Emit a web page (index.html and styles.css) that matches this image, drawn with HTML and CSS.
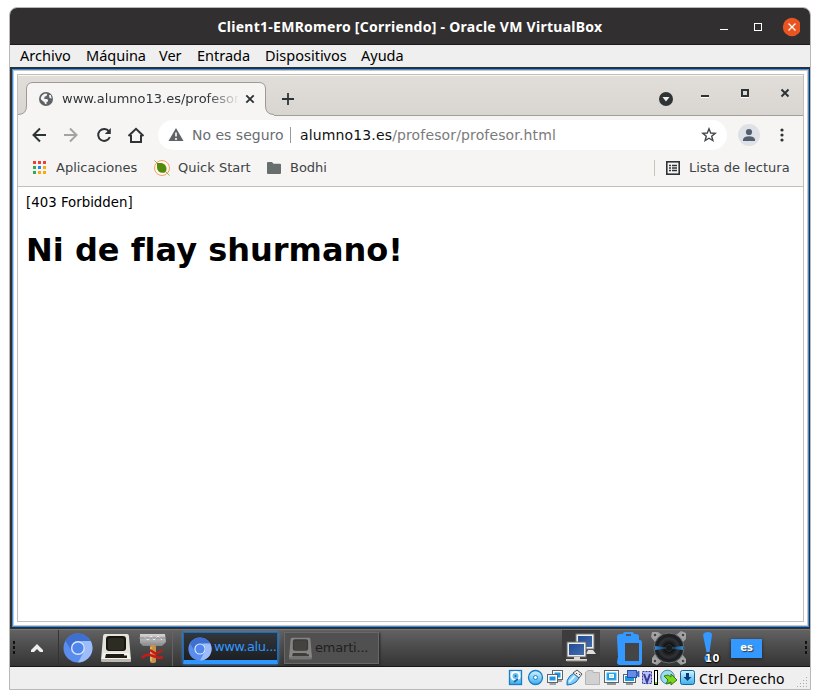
FILE: index.html
```html
<!DOCTYPE html>
<html lang="es">
<head>
<meta charset="utf-8">
<title>Client1-EMRomero [Corriendo] - Oracle VM VirtualBox</title>
<link rel="stylesheet" href="styles.css">
</head>
<body>
<svg class="defs" width="0" height="0">
  <defs>
    <linearGradient id="blueGrad" x1="0" y1="0" x2="0" y2="1"><stop offset="0" stop-color="#d2f5ff"/><stop offset="1" stop-color="#39aef0"/></linearGradient>
    <linearGradient id="brick" x1="0" y1="0" x2="0" y2="1"><stop offset="0" stop-color="#d5d5d5"/><stop offset="1" stop-color="#888"/></linearGradient>
    <linearGradient id="screen" x1="0" y1="0" x2="1" y2="1"><stop offset="0" stop-color="#234c94"/><stop offset="1" stop-color="#416ead"/></linearGradient>
    <radialGradient id="cone"><stop offset="0" stop-color="#111"/><stop offset=".28" stop-color="#292c30"/><stop offset=".34" stop-color="#111"/><stop offset=".75" stop-color="#303338"/><stop offset="1" stop-color="#17191b"/></radialGradient>
    <linearGradient id="glow"><stop offset="0" stop-color="#269cff" stop-opacity=".9"/><stop offset=".5" stop-color="#1a5f9e" stop-opacity=".2"/><stop offset="1" stop-color="#269cff" stop-opacity=".9"/></linearGradient>
    <symbol id="chromium" viewBox="0 0 30 30">
      <circle cx="15" cy="15" r="14.500" fill="#5b8def"/>
      <path d="M2.400 7.800A14.500 14.500 0 0 1 27.700 8H15A7 7 0 0 0 9 18.500Z" fill="#3f6fd0"/>
      <path d="M27.700 8A14.500 14.500 0 0 1 15 29.500L21 18.500A7 7 0 0 0 21 11L18 8Z" fill="#9dbdf9"/>
      <circle cx="15" cy="15" r="7" fill="#dce8ff"/><circle cx="15" cy="15" r="5.600" fill="#4f86ec"/>
    </symbol>
    <symbol id="terminal" viewBox="0 0 32 30">
      <path d="M5 1H27Q29 1 29 4L31 27Q31 29 29 29H3Q1 29 1 27L3 4Q3 1 5 1Z" fill="#e5e3dc"/>
      <path d="M3 20H29L30.500 26H1.500Z" fill="#f3f2ed"/><path d="M1 26H31V28Q31 29 29 29H3Q1 29 1 27Z" fill="#bbb8b0"/>
      <rect x="6" y="3" width="20" height="15" rx="3" fill="#17160f"/><rect x="8" y="5" width="16" height="12" rx="2" fill="#2d2c22"/>
      <path d="M6 21H24V22.500H27V25H5Z" fill="#211b18"/>
    </symbol>
  </defs>
</svg>
<div class="window">
  <header class="titlebar">
    <h1 class="title"><span>Client1-EMRomero [Corriendo] - Oracle VM VirtualBox</span></h1>
    <div class="host-controls">
      <svg width="90" height="24" viewBox="0 0 90 24"><path d="M10 14.500h8" stroke="#fff"/><rect x="44.500" y="8.500" width="7" height="7" fill="none" stroke="#fff"/><circle cx="82" cy="12" r="9.200" fill="#e95420"/><path d="M78.500 8.500l7 7m0-7l-7 7" stroke="#fff" stroke-width="1.300"/></svg>
    </div>
  </header>
  <nav class="menubar"><span>Archivo</span><span>Máquina</span><span>Ver</span><span>Entrada</span><span>Dispositivos</span><span>Ayuda</span></nav>

  <section class="guest">
    <div class="guest-frame">
      <div class="browser">
        <div class="tabstrip">
          <div class="tab">
            <svg class="tab-shape" width="257" height="34" viewBox="0 0 257 34"><path d="M0 34V32.500Q8.500 32.500 8.500 24V7Q8.500 .5 15 .5H241Q247.500 .5 247.500 7V24Q247.500 32.500 256 32.500V34Z" fill="#f6f5f3"/><path d="M0 32.500Q8.500 32.500 8.500 24V7Q8.500 .5 15 .5H241Q247.500 .5 247.500 7V24Q247.500 32.500 256 32.500" fill="none" stroke="#9c9a97"/></svg>
            <svg class="globe" width="14" height="14" viewBox="0 0 14 14"><circle cx="7" cy="7" r="7" fill="#5f6368"/><path d="M7 1.500C9.500 2 7.500 4.500 5.500 4.700L5.300 7H8Q9.500 7.500 9 9.500L7.500 10V12.300Q5.500 12.500 5.600 10.500L2 7.500Q1 4.500 5 2ZM10 3H11.800L12.700 6.500L10.500 6Z" fill="#f6f5f3"/></svg>
            <span class="tab-label">www.alumno13.es/profesor</span>
            <svg class="tab-close" width="10" height="10" viewBox="0 0 10 10"><path d="M1.300 1.300l7.400 7.400m0-7.400L1.300 8.700" stroke="#2e3436" stroke-width="1.900"/></svg>
          </div>
          <svg class="plus" width="12" height="12" viewBox="0 0 12 12"><path d="M6 0v12M0 6h12" stroke="#2e3436" stroke-width="1.800"/></svg>
          <svg class="guest-controls" width="134" height="24" viewBox="0 0 134 24"><circle cx="8" cy="14" r="7" fill="#2e3436"/><path d="M4.500 12h7L8 16.500z" fill="#f1efec"/><path d="M43 11h8" stroke="#2e3436" stroke-width="2"/><path d="M43 12.500h8" stroke="#fff"/><rect x="84" y="5" width="6" height="6" fill="none" stroke="#2e3436" stroke-width="2"/><path d="M83 12.500h8" stroke="#fff"/><path d="M123.500 4.500l7 7m0-7l-7 7" stroke="#2e3436" stroke-width="2"/></svg>
        </div>
        <div class="toolbar">
          <svg class="nav-icons" width="120" height="20" viewBox="0 0 120 20" fill="none" stroke="#2e3436" stroke-width="2"><path d="M16 10H3.500M10 3.500L3.500 10L10 16.500"/><path d="M34 10H46.500M40 3.500L46.500 10L40 16.500" stroke="#a3a3a3"/><path d="M79 6.300A6 6 0 1 0 79.800 12"/><path d="M80.800 3V9H74.800Z" fill="#2e3436" stroke="none"/><path d="M98.500 11L106 3.800L113.500 11M101 10V17H111V10"/></svg>
          <div class="address">
            <svg width="16" height="14" viewBox="0 0 16 14"><path d="M8 0L15.500 13H.5Z" fill="#5f6368"/><path d="M8 4.500V8.500M8 10V12" stroke="#fff" stroke-width="1.600"/></svg>
            <span class="unsafe">No es seguro</span><i class="divider"></i>
            <span class="url"><b>alumno13.es</b>/profesor/profesor.html</span>
            <svg class="star" width="16" height="16" viewBox="0 0 16 16"><path d="M8 1.800L9.700 6L14.200 6.300L10.700 9.200L11.900 13.600L8 11.200L4.100 13.600L5.300 9.200L1.800 6.300L6.300 6Z" fill="none" stroke="#44494d" stroke-width="1.400"/></svg>
          </div>
          <svg class="avatar" width="22" height="22" viewBox="0 0 22 22"><circle cx="11" cy="11" r="11" fill="#dee1e6"/><circle cx="11" cy="8" r="3.100" fill="#535f70"/><path d="M5 17V15.500Q6 12.300 11 12.300T17 15.500V17Z" fill="#535f70"/></svg>
          <svg class="dots" width="4" height="14" viewBox="0 0 4 14" fill="#2e3436"><circle cx="2" cy="2" r="1.600"/><circle cx="2" cy="7" r="1.600"/><circle cx="2" cy="12" r="1.600"/></svg>
        </div>
        <div class="bookmarks">
          <svg width="13" height="13" viewBox="0 0 13 13"><path d="M0 0h3v3H0zM5 0h3v3H5zM10 0h3v3h-3z" fill="#ea4335"/><path d="M0 5h3v3H0zM0 10h3v3H0z" fill="#34a853"/><path d="M5 5h3v3H5z" fill="#1a88f5"/><path d="M10 5h3v3h-3zM5 10h3v3H5zM10 10h3v3h-3z" fill="#fbab08"/></svg>
          <span class="apps">Aplicaciones</span>
          <svg width="16" height="16" viewBox="0 0 16 16"><circle cx="8" cy="8" r="7.500" fill="#fff8ef" stroke="#f2a06a"/><path d="M.5.5L15.500 15.500" stroke="#8ebc49"/><path d="M3 3H8Q13 5 12.500 10L11 12.500Q4 14 3 8Z" fill="#558b0b"/></svg>
          <span class="quick">Quick Start</span>
          <svg width="14" height="12" viewBox="0 0 14 12"><path d="M0 1Q0 0 1 0H5L6.500 1.700H13Q14 1.700 14 2.700V11Q14 12 13 12H1Q0 12 0 11Z" fill="#686d6e"/></svg>
          <span class="bodhi">Bodhi</span>
          <i class="bookmark-divider"></i>
          <svg width="14" height="14" viewBox="0 0 14 14"><rect x=".8" y=".8" width="12.400" height="12.400" fill="none" stroke="#2e3436" stroke-width="1.600"/><path d="M3 4.500h2M3 7h2M3 9.500h2M6 4.500h5M6 7h5M6 9.500h5" stroke="#2e3436" stroke-width="1.500"/></svg>
          <span class="reading">Lista de lectura</span>
        </div>
        <main class="page"><p>[403 Forbidden]</p><h2>Ni de flay shurmano!</h2></main>
      </div>
    </div>
    <div class="taskbar">
      <svg class="grip" width="4" height="14" viewBox="0 0 4 14" fill="#111"><rect width="2" height="3"/><rect y="5" width="2" height="3"/><rect y="10" width="2" height="3"/></svg>
      <div class="launcher"><svg width="12" height="9" viewBox="0 0 12 9"><path d="M0 6L6 0L12 6V8H9L6 5L3 8H0Z" fill="#eee"/></svg></div>
      <div class="shortcuts">
        <svg width="30" height="30"><use href="#chromium"/></svg>
        <svg width="32" height="30"><use href="#terminal"/></svg>
        <svg width="28" height="32" viewBox="0 0 28 32"><path d="M1 2H26L27 10L23 14H4L1 11Z" fill="url(#brick)"/><path d="M5 5L9 8L12 4L15 8L19 4L23 8" fill="none" stroke="#eee"/><path d="M0 6H27" stroke="#888"/><rect x="11" y="13" width="6" height="18" rx="2" fill="#c69449"/><path d="M12 15V29" stroke="#efcb89"/><path d="M3 26Q6 22 11 23L20 26L24 25M11 18L17 22L23 18" fill="none" stroke="#c71a16" stroke-width="2.500"/></svg>
      </div>
      <div class="task active"><svg width="24" height="24"><use href="#chromium"/></svg><span>www.alu...</span></div>
      <div class="task idle"><svg width="25" height="23"><use href="#terminal"/></svg><span>emarti...</span></div>
      <div class="tray">
        <div class="network"><svg width="30" height="30" viewBox="0 0 30 30"><rect x="10" y="1" width="18" height="15" fill="#eee" stroke="#777"/><rect x="12" y="3" width="14" height="11" fill="url(#screen)"/><path d="M22 17h5l3 4H20z" fill="#ddd"/><rect x="1" y="9" width="19" height="15" fill="#eee" stroke="#666"/><rect x="3" y="11" width="15" height="11" fill="url(#screen)"/><path d="M8 24h6v2h7v2H0v-2h8z" fill="#ddd8cb"/><path d="M1 28h20" stroke="#888"/></svg></div>
        <svg class="clipboard" width="25" height="33" viewBox="0 0 25 33"><path d="M0 5Q0 2 3 2H6Q6 0 8 0H15Q17 0 17 2H19Q22 2 22 5V8H23Q25 8 25 11V30Q25 33 22 33H3Q0 33 0 30L1 25Z" fill="#3398ff"/><rect x="8" y="11" width="14" height="18" fill="#454545"/><rect x="9" y="2" width="5" height="2" fill="#555"/></svg>
        <svg class="speaker" width="36" height="34" viewBox="0 0 36 34"><path d="M1 1H7L11 4H25L30 0L35 2V8L31 12V23L35 28V32L30 34L25 30H11L6 34L1 32V27L4 23V11L0 6Z" fill="#9c9d9e"/><circle cx="18" cy="17" r="15" fill="#202327" stroke="#6c6d6e"/><circle cx="18" cy="17" r="12.500" fill="url(#cone)"/><path d="M4 15L18 16.500L32 15V19L18 17.500L4 19Z" fill="url(#glow)"/><circle cx="18" cy="17" r="3" fill="#181b1e"/><g fill="#444" stroke="#bbb"><circle cx="4" cy="4" r="2"/><circle cx="32" cy="4" r="2"/><circle cx="4" cy="30" r="2"/><circle cx="32" cy="30" r="2"/></g></svg>
        <div class="notice"><svg width="10" height="30" viewBox="0 0 10 30"><path d="M0 3Q1 0 5 0T9 3L6.500 20H3.500Z" fill="#3398ff"/><circle cx="5" cy="26" r="3.500" fill="#3398ff"/></svg><b>10</b></div>
        <span class="language">es</span>
        <svg class="grip end" width="4" height="14" viewBox="0 0 4 14" fill="#111"><rect width="2" height="3"/><rect y="5" width="2" height="3"/><rect y="10" width="2" height="3"/></svg>
      </div>
    </div>
  </section>
  <footer class="statusbar">
    <svg width="188" height="18" viewBox="0 0 188 18">
      <g fill="url(#blueGrad)" stroke="#1d7cc4" stroke-width="1.300">
        <rect x="1.500" y="1.500" width="12" height="14"/><circle cx="27.500" cy="8.500" r="7"/>
      </g>
      <circle cx="7.500" cy="7" r="4" fill="#65bced" stroke="#fff" stroke-width="2"/><circle cx="7.500" cy="7" r="1" fill="#166aab"/><path d="M10 10L6 13" stroke="#166aab" stroke-width="2"/>
      <circle cx="27.500" cy="8.500" r="2" fill="#fff" stroke="#1580cf"/>
      <g stroke="#5c6470"><rect x="44.500" y="1.500" width="10" height="9" fill="#fff"/><rect x="46.500" y="3.500" width="6" height="5" fill="#1c9ae1" stroke="none"/><rect x="39.500" y="5.500" width="10" height="8" fill="#fff"/><rect x="41.500" y="7.500" width="6" height="4" fill="#1c9ae1" stroke="none"/></g><path d="M41.500 15H48M50 12H54" stroke="#888" stroke-width="1.500"/>
      <path d="M59 16Q58 11 62 7L66 4L71 9L68 13Q64 16 59 16Z" fill="#7bceff" stroke="#1769ad"/><path d="M65 4L69 1L74 5L71 9Z" fill="#eee" stroke="#555"/><path d="M68 4l1 1M71 5l1 1" stroke="#444"/><path d="M61 13L67 7" stroke="#d7f3ff" stroke-width="2"/>
      <path d="M77.500 15.500V3.500L80 1.500H85V3.500H91.500V15.500Z" fill="#d1d1d1" stroke="#b4b4b4"/>
      <rect x="96.500" y="1.500" width="14" height="12" fill="#fff" stroke="#5c6470"/><rect x="99" y="4" width="9" height="7" fill="#1c9ae1" stroke="#36b4f3"/><rect x="101.500" y="5.500" width="4" height="3" fill="#b8edff" stroke="#fff"/><path d="M99 15H108" stroke="#777" stroke-width="1.500"/>
      <rect x="115.500" y="5.500" width="12" height="8" fill="#fff" stroke="#5c6470"/><rect x="117" y="7" width="9" height="5" fill="#1c9ae1"/><path d="M118 15H125" stroke="#777" stroke-width="1.500"/><rect x="119.500" y="1.500" width="9" height="7" fill="#668be5" stroke="#244fae"/><path d="M128 4L131 2V8L128 6" fill="#4269c9" stroke="#244fae" stroke-width=".7"/>
      <rect x="134.500" y="2.500" width="9" height="12" fill="#b9bcff" stroke="#343c91" stroke-dasharray="2 1"/><path d="M136 5L139 13L142 5" fill="none" stroke="#343c91" stroke-width="2"/><rect x="146.500" y="1.500" width="3" height="14" fill="#fff" stroke="#000"/><path d="M148 13V15" stroke="#56e600" stroke-width="2"/>
      <circle cx="159.500" cy="8" r="6.800" fill="#9bdcf2" stroke="#4286a5"/><path d="M156 7L160 6L163 8V5L169 11L163 16V13L158 15L160 11Z" fill="#7bd61d" stroke="#36780c"/>
      <rect x="172.500" y="1.500" width="14" height="14" rx="2" fill="url(#blueGrad)" stroke="#16649b"/><path d="M179.500 4V9" stroke="#063f77" stroke-width="3"/><path d="M175.500 8H183.500L179.500 12Z" fill="#063f77"/>
    </svg>
    <span>Ctrl Derecho</span>
    <svg class="resize" width="11" height="11" viewBox="0 0 11 11" stroke="#aaa" stroke-dasharray="1 2"><path d="M9 .5h2M6 3.500h5M3 6.500h8M0 9.500h11"/></svg>
  </footer>
</div>
</body>
</html>
```

FILE: styles.css
```css
* { box-sizing: border-box; }
body { margin: 0; background: #fff; font-family: "DejaVu Sans", sans-serif; }
svg { display: block; flex-shrink: 0; }
.defs { position: absolute; }
.window { width: 802px; height: 683px; margin: 7px 0 0 9px; border: 1px solid #b8b8b8; border-radius: 8px 8px 0 0; background: #efefef; overflow: hidden; }
.titlebar { height: 37px; background: #322f30; border-bottom: 1px solid #1c1a1b; display: grid; grid-template-columns: 1fr; align-items: center; }
.title { grid-area: 1 / 1; margin: 0; padding-top: 1px; text-align: center; color: #fff; font: 700 14px/36px "Noto Sans", sans-serif; letter-spacing: .27px; white-space: nowrap; }
.host-controls { grid-area: 1 / 1; justify-self: end; padding-right: 10px; }
.menubar { height: 22px; padding-left: 10px; display: grid; grid-template-columns: 66px 73px 38px 68px 96px auto; font: 14.5px/21px "Noto Sans", sans-serif; color: #000; }
.guest { height: 600px; background: #333; display: flex; flex-direction: column; }
.guest-frame { height: 562px; padding: 5px; border: solid #303030; border-width: 2px 1px 2px 2px; background: #fff; box-shadow: inset 0 0 0 1px #2e91f8, inset 0 0 0 2px #c9c9c9; }
.browser { height: 548px; border: 1px solid #c2beb8; background: #fff; }
.tabstrip { height: 41px; display: flex; background: linear-gradient(#e1deda, #d9d6d1); border-top: 1px solid #f7f6f5; border-bottom: 1px solid #a09e9b; }
.tab { width: 257px; height: 34px; margin-top: 6px; display: grid; grid-template-columns: 21px 23px 181px 12px; align-items: center; flex-shrink: 0; }
.tab-shape { grid-area: 1 / 1 / 2 / 5; z-index: 0; }
.globe { grid-area: 1 / 1; margin-left: 21px; z-index: 1; }
.tab-label { grid-area: 1 / 3; z-index: 1; font-size: 13px; line-height: 32px; width: 176px; overflow: hidden; white-space: nowrap; color: #2e3436; -webkit-mask-image: linear-gradient(90deg, #000 145px, transparent 178px); }
.tab-close { grid-area: 1 / 4; z-index: 1; margin-left: 2px; }
.plus { margin: 17px 0 0 7px; }
.guest-controls { margin: 9px 11px 0 auto; }
.toolbar { height: 38px; display: flex; align-items: center; background: #f6f5f3; }
.nav-icons { margin-left: 12px; }
.address { width: 569px; height: 30px; margin-left: 8px; padding: 0 10px; border-radius: 15px; background: #fff; display: flex; align-items: center; font-size: 14px; white-space: nowrap; }
.unsafe { width: 98px; margin-left: 8px; color: #6a6e72; }
.divider { width: 1px; height: 16px; background: #999; }
.url { margin-left: 9px; color: #7b7b7b; letter-spacing: .14px; }
.url b { font-weight: 400; color: #111; }
.star { margin-left: auto; }
.avatar { margin-left: 11px; }
.dots { margin-left: 20px; }
.bookmarks { height: 33px; padding: 0 13px 5px 15px; display: flex; align-items: center; background: #f6f5f3; border-bottom: 1px solid #c4bfb8; color: #3d4345; font-size: 13px; white-space: nowrap; line-height: 28px; }
.apps { width: 88px; margin: 0 10px; }
.quick { width: 81px; margin: 0 8px; }
.bodhi { margin-left: 9px; }
.bookmark-divider { width: 1px; height: 16px; margin: 0 11px 0 auto; background: #c8c4b9; }
.reading { width: 101px; margin-left: 9px; }
.page { padding: 8px; color: #000; }
.page p { margin: 0; font: 13.333px/16px "DejaVu Sans", sans-serif; }
.page h2 { margin: 21px 0 0; font: 700 32px/37px "DejaVu Sans", sans-serif; white-space: nowrap; }
.taskbar { height: 38px; display: flex; align-items: center; background: linear-gradient(#626262, #4c4c4c 45%, #353535); border-top: 1px solid #777; border-bottom: 1px solid #171719; }
.grip { margin-left: 3px; }
.launcher { width: 42px; height: 36px; padding: 14px 0 0 14px; border-right: 1px solid #333; }
.shortcuts { width: 114px; height: 36px; padding: 0 0 0 4px; display: flex; align-items: center; gap: 7px; border-right: 1px solid #626262; }
.task { height: 32px; display: flex; align-items: center; white-space: nowrap; font-size: 13px; }
.active { width: 95px; margin-left: 10px; padding-left: 4px; background: linear-gradient(#32373c, #1d1f22); border: 1px solid #176db6; border-bottom: 4px solid #2e96ff; box-shadow: 0 0 3px #2b93ff; color: #3398ff; }
.active svg { margin-top: 4px; }
.active span { margin-left: 2px; letter-spacing: -.45px; }
.idle { width: 95px; margin-left: 6px; padding-left: 3px; background: #505050; border: 1px solid #686868; box-shadow: 1px 1px 2px #222; color: #202020; }
.idle svg { opacity: .35; }
.idle span { margin: -2px 0 0 2px; letter-spacing: -.2px; }
.tray { flex: 1; display: flex; align-items: center; height: 36px; }
.network { width: 38px; height: 36px; margin-left: 183px; padding: 3px 4px; background: #3c3c3c; flex-shrink: 0; }
.clipboard { margin-left: 17px; }
.speaker { margin-left: 9px; }
.notice { width: 24px; height: 32px; margin-left: 16px; display: flex; color: #fff; flex-shrink: 0; }
.notice b { align-self: flex-end; margin: 0 0 -1px -8px; font-size: 10px; letter-spacing: .6px; line-height: 12px; text-shadow: 0 1px 1px #000, 1px 0 1px #000; position: relative; z-index: 1; }
.language { width: 31px; height: 19px; margin-left: 4px; background: #3398ff; color: #fff; text-align: center; font: 700 10px/18px "DejaVu Sans", sans-serif; text-shadow: 1px 1px 1px #333; box-shadow: 0 1px 3px #222; }
.end { margin: 0 1px 0 auto; }
.statusbar { height: 22px; display: flex; padding: 2px 1px 0 498px; }
.statusbar span { margin-left: 3px; padding-top: 1px; font: 14px/18px "Noto Sans", sans-serif; letter-spacing: .3px; white-space: nowrap; color: #000; }
.resize { margin: 8px 1px 0 auto; }
```
